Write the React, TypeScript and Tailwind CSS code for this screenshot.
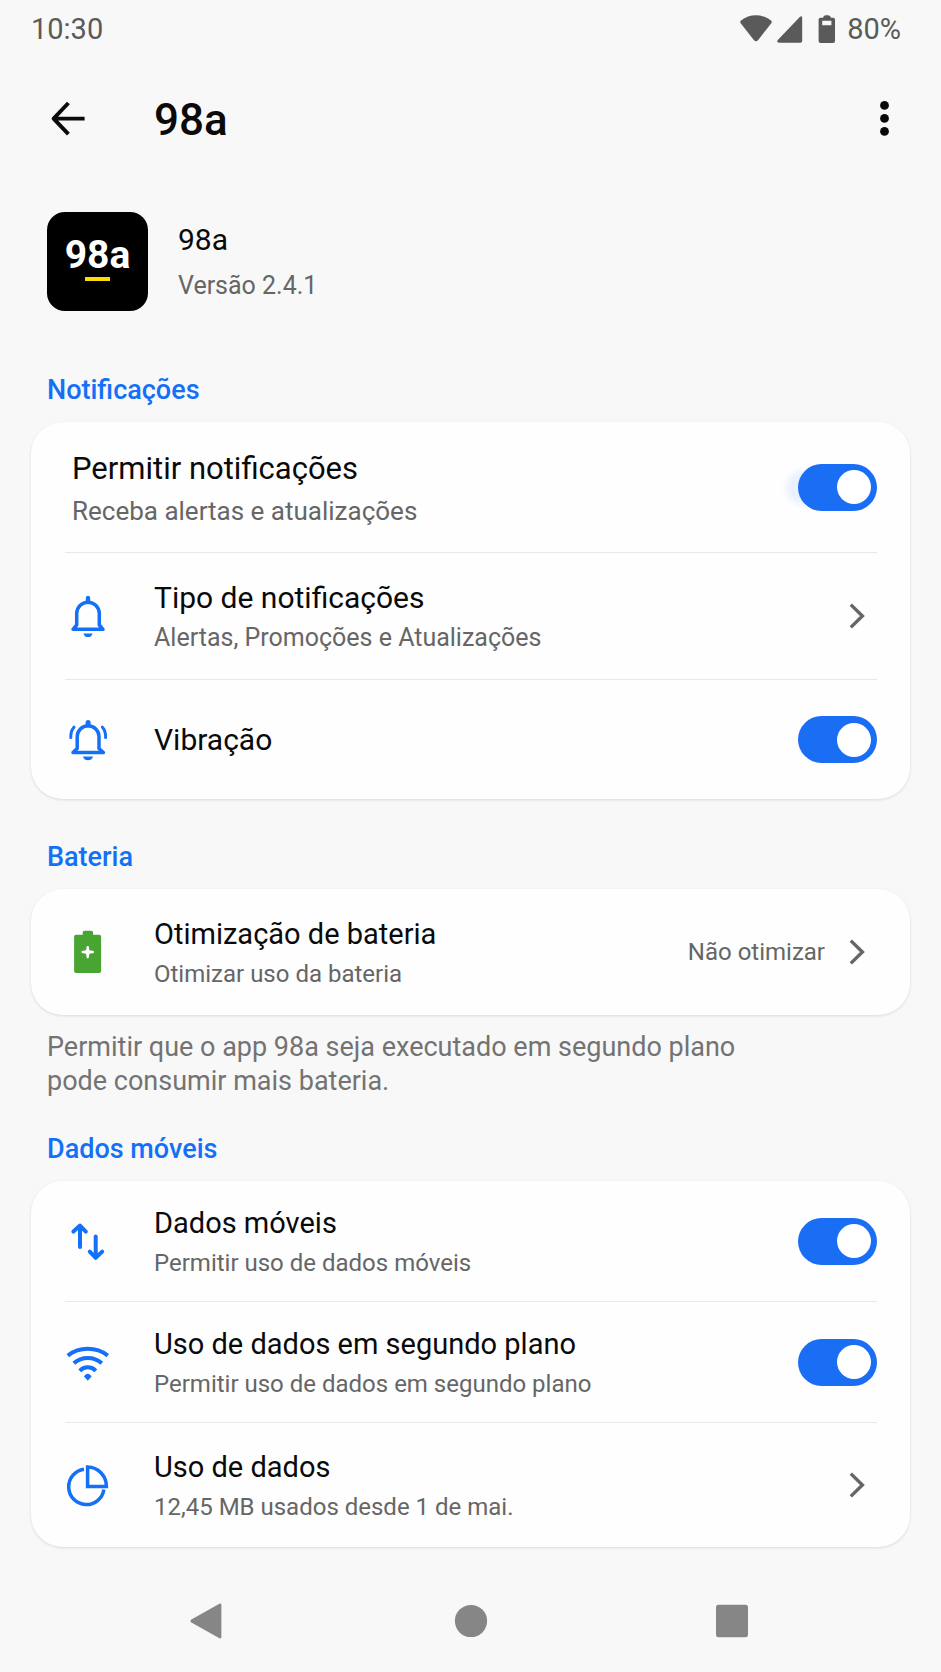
import type { ReactNode } from 'react';
import { useState } from 'react';

function Icon({ children }: { children: ReactNode }) {
  return (
    <svg
      viewBox="0 0 44 44"
      className="w-11 h-11 shrink-0 mr-[45px] overflow-visible text-[#1470f6]"
      fill="none"
      stroke="currentColor"
      strokeWidth="3.5"
      strokeLinecap="round"
      strokeLinejoin="round"
      aria-hidden="true"
    >
      {children}
    </svg>
  );
}

function BellIcon() {
  return (
    <Icon>
      <path d="M8 35.3 L11.7 31 V19.6 a11.3 11.3 0 0 1 22.6 0 V31 L38 35.3 Z" />
      <path d="M23 4 V7" strokeWidth="4.4" />
      <path d="M18.5 39.4 h9 c-.6 2.4 -2.3 3.6 -4.5 3.6 s-3.9 -1.2 -4.5 -3.6 Z" fill="currentColor" stroke="none" />
    </Icon>
  );
}

function VibrateIcon() {
  return (
    <Icon>
      <path d="M8 34.5 L12.2 30.5 V18.6 a10.9 10.9 0 0 1 21.8 0 V30.5 L38.4 34.5 Z" />
      <path d="M23.1 4.6 V7" strokeWidth="5" />
      <path d="M18 38.4 h10 c-.6 2.6 -2.6 3.8 -5 3.8 s-4.4 -1.2 -5 -3.8 Z" fill="currentColor" stroke="none" />
      <path d="M9 9.2 C6.6 11.8 5.6 15 5.8 19.6" strokeWidth="3" />
      <path d="M37.4 9.2 C39.8 11.8 40.8 15 40.6 19.6" strokeWidth="3" />
    </Icon>
  );
}

function BatteryIcon() {
  return (
    <Icon>
      <g stroke="none">
        <path
          d="M19.5 .7 h6.8 a1.8 1.8 0 0 1 1.8 1.8 v2.2 h6 a2 2 0 0 1 2 2 v34.2 a2 2 0 0 1 -2 2 h-23 a2 2 0 0 1 -2 -2 v-34.2 a2 2 0 0 1 2 -2 h6.6 v-2.2 a1.8 1.8 0 0 1 1.8 -1.8 Z"
          fill="#48a532"
        />
        <path
          d="M21.8 16 h1.8 l.8 4.2 l4.4 .8 v2 l-4.4 .8 l-.8 4.4 h-1.8 l-.8 -4.4 l-4.4 -.8 v-2 l4.4 -.8 Z"
          fill="#fff"
        />
      </g>
    </Icon>
  );
}

function DataArrowsIcon() {
  return (
    <Icon>
      <g strokeWidth="4">
        <path d="M15 7 V28 M8.4 12.6 L15 6.6 L20.8 12.6" />
        <path d="M30.7 17.4 V38.4 M24.8 32.6 L30.7 38.8 L37.2 32.6" />
      </g>
    </Icon>
  );
}

function WifiIcon() {
  return (
    <Icon>
      <g strokeWidth="4" strokeLinecap="butt">
        <path d="M2.8 15.6 A33 33 0 0 1 42.8 15.6" />
        <path d="M8.8 23.3 A21 21 0 0 1 36.8 23.3" />
        <path d="M14.8 30.8 A11 11 0 0 1 30.8 30.8" />
      </g>
      <path d="M19 36.4 c2 -3.4 5.6 -3.4 7.6 0 L22.8 40.8 Z" fill="currentColor" stroke="none" />
    </Icon>
  );
}

function PieIcon() {
  return (
    <Icon>
      <g strokeLinecap="butt" strokeLinejoin="miter">
        <path d="M19 6.3 A17.7 17.7 0 1 0 38.9 26.4" />
        <path d="M22.6 3.9 A19 19.4 0 0 1 41.4 23.4 H22.6 Z" />
      </g>
    </Icon>
  );
}

function Chevron() {
  return (
    <svg viewBox="0 0 16 26" className="w-4 h-[26px] shrink-0 mr-3" fill="none" stroke="#666" strokeWidth="3.4" aria-hidden="true">
      <path d="M1.8 1.6 L13.4 13 L1.8 24.4" />
    </svg>
  );
}

function Switch({ glow = false }: { glow?: boolean }) {
  const [on, setOn] = useState(true);
  return (
    <input
      type="checkbox"
      role="switch"
      checked={on}
      onChange={() => setOn(!on)}
      className={`appearance-none inline-flex items-center shrink-0 w-[79px] h-[47px] pl-1.5 rounded-full cursor-pointer bg-gray-300 checked:bg-[#1a6ef3] before:block before:size-[34px] before:rounded-full before:bg-white checked:before:translate-x-[33px] ${
        glow ? 'shadow-[-18px_0_6px_-6px_#eaf1fe]' : ''
      }`}
    />
  );
}

function RowText({ title, sub, large = false }: { title: string; sub?: string; large?: boolean }) {
  return (
    <span className="flex-1 min-w-0 text-left">
      <span className={`block leading-11 text-[#0a0a0a] ${large ? 'text-[30px]' : 'text-[29px]'}`}>{title}</span>
      {sub && <span className={`block leading-9 text-[#666] ${large ? 'text-[25px]' : 'text-[24px]'}`}>{sub}</span>}
    </span>
  );
}

function Card({ children }: { children: ReactNode }) {
  return (
    <div className="mx-[31px] rounded-[32px] bg-[#fefefe] pl-[34px] pr-[33px] divide-y divide-[#e8e8e8] shadow-[0_1px_3px_rgba(0,0,0,0.12)]">
      {children}
    </div>
  );
}

function SectionTitle({ children }: { children: ReactNode }) {
  return <h2 className="px-[47px] mb-4 text-[27px] leading-8 font-medium text-[#1470f6]">{children}</h2>;
}

export default function App() {
  return (
    <div className="min-h-screen flex flex-col bg-[#f8f8f8] font-[Roboto,sans-serif]">
      <div className="h-[60px] pl-[31px] pr-10 flex items-center justify-between text-[29px] text-[#5a5a5a]">
        <span>10:30</span>
        <div className="flex items-center">
          <svg viewBox="0 0 32 30" className="w-8 h-[30px] mr-[5px]" fill="currentColor" aria-hidden="true">
            <path d="M1 5.6 C9.5 -1.4 22.5 -1.4 31 5.6 Q32.4 6.8 31.3 8.2 L18 25.2 Q16 27.4 14 25.2 L.7 8.2 Q-.4 6.8 1 5.6 Z" />
          </svg>
          <svg viewBox="0 0 26 30" className="w-[26px] h-[30px] mr-[15px]" fill="currentColor" aria-hidden="true">
            <path d="M23 1.8 Q25.2 .2 25.2 2.8 V26 Q25.2 27.8 23.4 27.8 H2 Q-.8 27.4 .8 25 Z" />
          </svg>
          <svg viewBox="0 0 18 30" className="w-[18px] h-[30px] mr-[11px]" fill="currentColor" aria-hidden="true">
            <path
              fillRule="evenodd"
              d="M5 2.8 Q5.4 .2 7.6 .2 H10.2 Q12.4 .2 13 2.8 H15.4 Q17 2.8 17 4.6 V26 Q17 28 15 28 H2.6 Q.6 28 .6 26 V4.6 Q.6 2.8 2.4 2.8 Z M4.2 5.8 V10.2 H13.4 V5.8 Z"
            />
          </svg>
          <span>80%</span>
        </div>
      </div>

      <header className="h-[120px] pl-[46px] pr-[34px] flex items-center">
        <button type="button" aria-label="Voltar" className="mr-16">
          <svg viewBox="0 0 44 44" className="w-11 h-11" fill="none" stroke="#0a0a0a" strokeWidth="3.9" aria-hidden="true">
            <path d="M38.6 20.6 H8 M22.4 5 L7.6 20.6 L22.4 36.2" strokeLinejoin="round" />
          </svg>
        </button>
        <h1 className="flex-1 text-[44px] leading-[52px] font-medium text-[#0a0a0a]">98a</h1>
        <button type="button" aria-label="Mais opções">
          <svg viewBox="0 0 44 44" className="w-11 h-11" fill="#0a0a0a" aria-hidden="true">
            <circle cx="21.5" cy="7.4" r="4.4" />
            <circle cx="21.5" cy="20.4" r="4.4" />
            <circle cx="21.5" cy="33.4" r="4.4" />
          </svg>
        </button>
      </header>

      <main>
        <div className="mt-8 px-[47px] flex items-center">
          <div className="w-[101px] h-[99px] mr-[30px] pb-2.5 rounded-[18px] bg-black flex flex-col items-center justify-center">
            <span className="text-[39px] leading-11 font-bold text-white">98a</span>
            <span className="w-[25px] h-1 bg-[#fbdc05]"></span>
          </div>
          <div>
            <p className="text-[30px] leading-12 text-[#0a0a0a]">98a</p>
            <p className="text-[25px] leading-11 text-[#666]">Versão 2.4.1</p>
          </div>
        </div>

        <section className="mt-[63px]">
          <SectionTitle>Notificações</SectionTitle>
          <Card>
            <label className="flex items-center py-[23px] cursor-pointer">
              <span className="flex-1 pl-[7px]">
                <span className="block text-[31px] leading-12 text-[#0a0a0a]">Permitir notificações</span>
                <span className="block text-[26px] leading-9 text-[#666]">Receba alertas e atualizações</span>
              </span>
              <Switch glow />
            </label>
            <button type="button" className="w-full flex items-center py-[23px]">
              <BellIcon />
              <RowText large title="Tipo de notificações" sub="Alertas, Promoções e Atualizações" />
              <Chevron />
            </button>
            <label className="flex items-center min-h-[119px] cursor-pointer">
              <VibrateIcon />
              <RowText large title="Vibração" />
              <Switch />
            </label>
          </Card>
        </section>

        <section className="mt-[42px]">
          <SectionTitle>Bateria</SectionTitle>
          <Card>
            <button type="button" className="w-full flex items-center py-[23px]">
              <BatteryIcon />
              <RowText title="Otimização de bateria" sub="Otimizar uso da bateria" />
              <span className="mr-6 text-[24px] leading-9 text-[#666]">Não otimizar</span>
              <Chevron />
            </button>
          </Card>
          <p className="mt-[15px] px-[47px] max-w-[800px] text-[27px] leading-[34px] text-[#737373]">
            Permitir que o app 98a seja executado em segundo plano pode consumir mais bateria.
          </p>
        </section>

        <section className="mt-[35px]">
          <SectionTitle>Dados móveis</SectionTitle>
          <Card>
            <label className="flex items-center py-5 cursor-pointer">
              <DataArrowsIcon />
              <RowText title="Dados móveis" sub="Permitir uso de dados móveis" />
              <Switch />
            </label>
            <label className="flex items-center py-5 cursor-pointer">
              <WifiIcon />
              <RowText title="Uso de dados em segundo plano" sub="Permitir uso de dados em segundo plano" />
              <Switch />
            </label>
            <button type="button" className="w-full flex items-center py-[22px]">
              <PieIcon />
              <RowText title="Uso de dados" sub="12,45 MB usados desde 1 de mai." />
              <Chevron />
            </button>
          </Card>
        </section>
      </main>

      <nav className="mt-auto h-[102px] px-[76px] grid grid-cols-3 items-center justify-items-center">
        <button type="button" aria-label="Voltar">
          <svg viewBox="0 0 36 36" className="w-9 h-9" fill="#868686" aria-hidden="true">
            <path d="M29.4 .8 Q31.4 0 31.4 2 V34 Q31.4 36 29.4 35.2 L1.4 19.6 Q-.6 18 1.4 16.4 Z" />
          </svg>
        </button>
        <button type="button" aria-label="Início">
          <svg viewBox="0 0 36 36" className="w-9 h-9" fill="#868686" aria-hidden="true">
            <circle cx="18" cy="18" r="16.1" />
          </svg>
        </button>
        <button type="button" aria-label="Recentes">
          <svg viewBox="0 0 36 36" className="w-9 h-9" fill="#868686" aria-hidden="true">
            <rect x="0" y="1.8" width="32" height="32.4" rx="2.6" />
          </svg>
        </button>
      </nav>
    </div>
  );
}
